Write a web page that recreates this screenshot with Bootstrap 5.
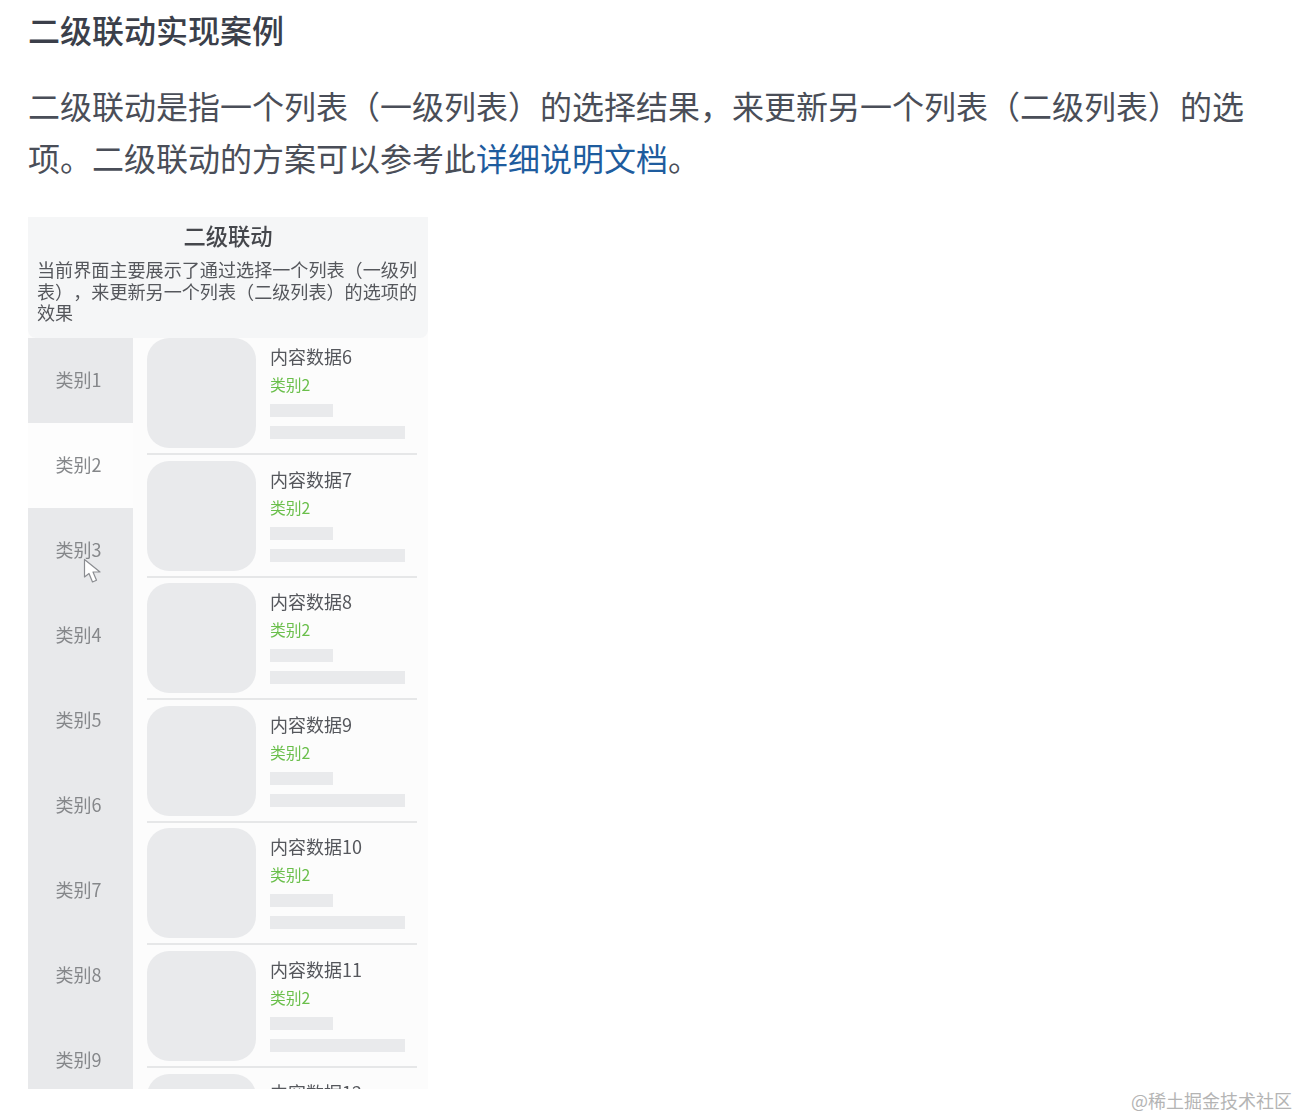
<!DOCTYPE html>
<html lang="zh-CN">
  <head>
    <meta charset="UTF-8" />
    <meta name="viewport" content="width=device-width, initial-scale=1.0" />
    <title>二级联动实现案例</title>
    <link
      rel="stylesheet"
      href="https://cdn.jsdelivr.net/npm/bootstrap@5.3.0/dist/css/bootstrap.min.css"
    />
    <style>
      body {
        background-color: #fff;
        font-family: "Noto Sans CJK SC", "Noto Sans", sans-serif;
        text-spacing-trim: space-all;
      }
      .article {
        padding: 4px 0 0 28px;
        width: 1258px;
      }
      .article-title {
        font-size: 32px;
        font-weight: 500;
        line-height: 50px;
        color: #3b3f4a;
        margin-bottom: 25px;
      }
      .article-text {
        font-size: 32px;
        line-height: 52px;
        color: #4a4e58;
        margin-bottom: 34px;
      }
      .article-text a {
        color: #1e5c9e;
        text-decoration: none;
      }
      .demo {
        width: 400px;
        height: 872px;
        background-color: #fcfcfc;
        filter: blur(0.35px);
      }
      .demo-head {
        height: 121px;
        padding: 4px 9px 0;
        background-color: #f5f6f7;
        border-radius: 0 0 8px 8px;
      }
      .demo-title {
        font-size: 22.3px;
        font-weight: 500;
        line-height: 28px;
        color: #45474c;
        text-align: center;
        margin-bottom: 10px;
      }
      .demo-desc {
        font-size: 18.1px;
        line-height: 21.5px;
        color: #55575c;
      }
      .side {
        width: 105px;
      }
      .side-row {
        height: 85px;
        background-color: #e8e9eb;
        color: #85878a;
        font-size: 18px;
        padding: 27px 4px 0 0;
        line-height: 29px;
        text-align: center;
      }
      .side-row.on {
        background-color: #fdfdfd;
      }
      .goods {
        margin-left: 14px;
        width: 270px;
      }
      .goods-item {
        height: 122.6px;
      }
      .goods-pic {
        width: 109px;
        height: 110px;
        background-color: #e9eaec;
        border-radius: 22px;
        flex-shrink: 0;
      }
      .goods-info {
        margin-left: 14px;
        flex: 1;
      }
      .goods-name {
        font-size: 18px;
        line-height: 26px;
        margin-top: 5px;
        color: #55575c;
      }
      .goods-tag {
        font-size: 15.8px;
        line-height: 22px;
        margin-top: 5px;
        color: #6abf4b;
      }
      .bar-a,
      .bar-b {
        background-color: #e9eaec;
        height: 13px;
      }
      .bar-a {
        width: 63px;
        margin-top: 8px;
      }
      .bar-b {
        width: 135px;
        margin-top: 9px;
      }
      .goods-line {
        height: 2px;
        margin-top: 5px;
        background-color: #e6e7e8;
      }
      .cursor {
        position: absolute;
        left: 83px;
        top: 558px;
      }
      .watermark {
        position: absolute;
        right: 6px;
        bottom: 6px;
        font-size: 18px;
        line-height: 24px;
        color: #b4b4b4;
      }
    </style>
  </head>
  <body>
    <div class="article">
      <div class="article-title">二级联动实现案例</div>
      <p class="article-text">
        二级联动是指一个列表（一级列表）的选择结果，来更新另一个列表（二级列表）的选项。二级联动的方案可以参考此<a href="#">详细说明文档</a>。
      </p>
      <div class="demo overflow-hidden">
        <div class="demo-head">
          <div class="demo-title">二级联动</div>
          <div class="demo-desc">当前界面主要展示了通过选择一个列表（一级列表），来更新另一个列表（二级列表）的选项的效果</div>
        </div>
        <div class="d-flex">
          <div class="side" id="side"></div>
          <div class="goods" id="goods"></div>
        </div>
      </div>
    </div>

    <svg class="cursor" width="21" height="27" viewBox="0 0 21 27">
      <path d="M1.5 1.5 L1.5 19 L6 15.5 L9.5 24 L13.5 22.3 L10 14 L17 14 Z" fill="#fff" stroke="#8b8d91" stroke-width="1.2" stroke-linejoin="round" />
    </svg>
    <div class="watermark">@稀土掘金技术社区</div>

    <script>
      const side = document.getElementById('side')
      for (let i = 1; i <= 9; i++) {
        const row = document.createElement('div')
        row.className = i === 2 ? 'side-row on' : 'side-row'
        row.innerText = '类别' + i
        side.appendChild(row)
      }

      const goods = document.getElementById('goods')
      for (let i = 6; i <= 12; i++) {
        const item = document.createElement('div')
        item.className = 'goods-item'
        item.innerHTML = `
          <div class="d-flex">
            <div class="goods-pic"></div>
            <div class="goods-info">
              <div class="goods-name">内容数据${i}</div>
              <div class="goods-tag">类别2</div>
              <div class="bar-a"></div>
              <div class="bar-b"></div>
            </div>
          </div>
          <div class="goods-line"></div>
        `
        goods.appendChild(item)
      }
    </script>
    <script src="https://cdn.jsdelivr.net/npm/bootstrap@5.3.0/dist/js/bootstrap.bundle.min.js"></script>
  </body>
</html>
